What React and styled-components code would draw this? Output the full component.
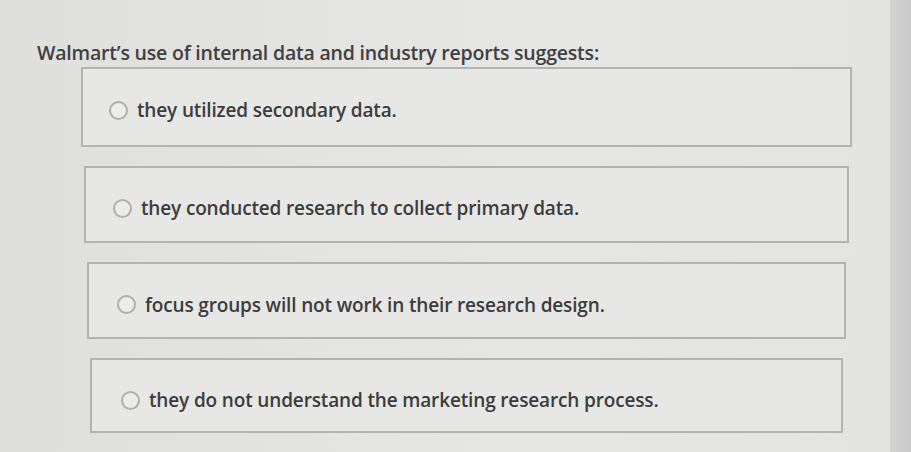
import React from "react";
import styled, { createGlobalStyle } from "styled-components";

const GlobalStyle = createGlobalStyle`
  html, body {
    margin: 0;
    padding: 0;
    background: #e2e2e0;
    font-family: "Open Sans", "Liberation Sans", sans-serif;
  }
`;

const options = [
  "they utilized secondary data.",
  "they conducted research to collect primary data.",
  "focus groups will not work in their research design.",
  "they do not understand the marketing research process.",
];

const Page = styled.div`
  display: flex;
  width: 911px;
  height: 452px;
  overflow: hidden;
`;

const Sheet = styled.div`
  flex: 1;
  padding: 41px 0 0 37px;
  background: linear-gradient(90deg, #dfdfdd 0%, #e6e6e4 60%, #e3e3e1 100%);
`;

const Edge = styled.div`
  width: 21px;
  background: linear-gradient(90deg, #d3d4d3, #c8c9c8);
`;

const Question = styled.h2`
  margin: 0 0 2px;
  font-size: 19.5px;
  line-height: 24px;
  font-weight: 600;
  color: #404040;
  letter-spacing: -0.2px;
`;

const Options = styled.div`
  display: flex;
  flex-direction: column;
  gap: 19px;
`;

const Choice = styled.label`
  display: flex;
  align-items: center;
  gap: 9px;
  height: ${(p) => p.$h}px;
  margin-left: ${(p) => 44 + p.$i * 3}px;
  width: ${(p) => 771 - p.$i * 6}px;
  box-sizing: border-box;
  padding: ${(p) => 6 + p.$i}px 0 0 ${(p) => 26 + p.$i * 1}px;
  border: 2px solid #b3b3b1;
  background: #e7e7e5;
  font-size: 19px;
  font-weight: 600;
  letter-spacing: -0.15px;
  color: #3c3c3c;
`;

const Radio = styled.span`
  width: 19px;
  height: 19px;
  border-radius: 50%;
  border: 2px solid #b0b0ae;
  background: #ececea;
  box-sizing: border-box;
  flex-shrink: 0;
`;

const heights = [80, 77, 77, 75];

export default function App() {
  return (
    <Page>
      <GlobalStyle />
      <Sheet>
        <Question>Walmart’s use of internal data and industry reports suggests:</Question>
        <Options>
          {options.map((text, i) => (
            <Choice key={i} $i={i} $h={heights[i]}>
              <Radio />
              {text}
            </Choice>
          ))}
        </Options>
      </Sheet>
      <Edge />
    </Page>
  );
}
